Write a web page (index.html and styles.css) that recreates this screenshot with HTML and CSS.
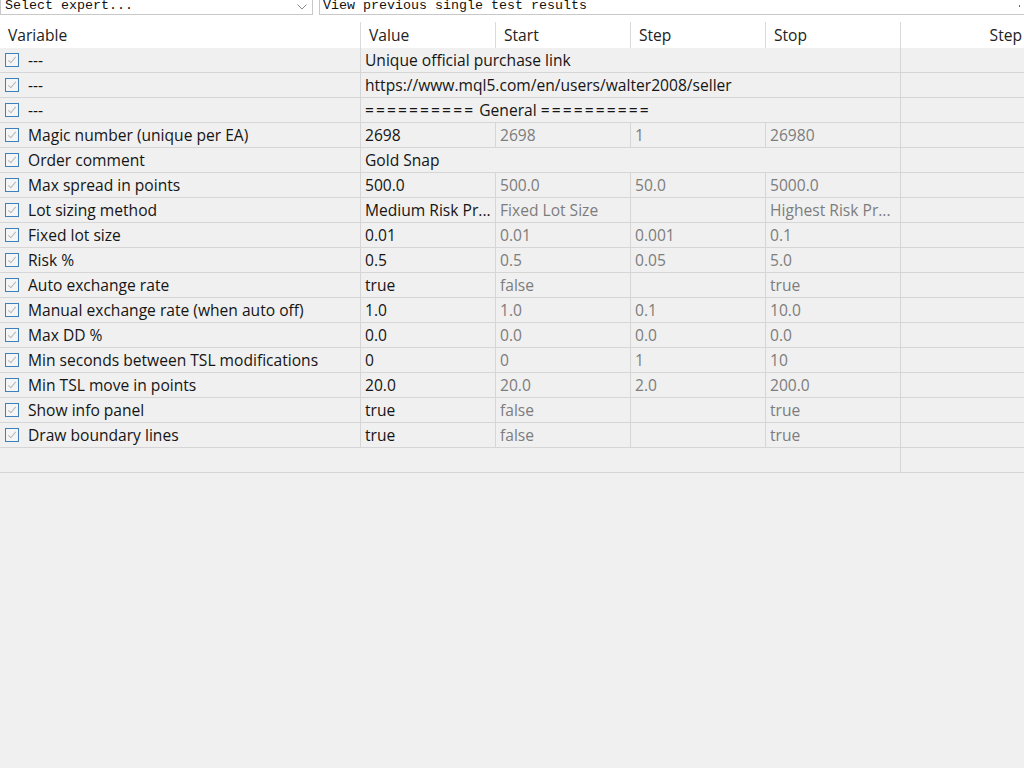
FILE: index.html
```html
<!DOCTYPE html>
<html>
<head>
<meta charset="utf-8">
<link rel="stylesheet" href="styles.css">
</head>
<body>
<div class="toolbar">
  <div class="combo expert"><span>Select expert...</span>
    <svg class="chev" width="10" height="6" viewBox="0 0 10 6"><path d="M0.5 0.5 L5 5 L9.5 0.5" fill="none" stroke="#8a8a8a" stroke-width="1"/></svg>
  </div>
  <div class="combo results"><span>View previous single test results</span><i class="tick"></i></div>
</div>
<div class="table">
  <div class="row head">
    <div class="c">Variable</div><div class="c">Value</div><div class="c">Start</div><div class="c">Step</div><div class="c">Stop</div><div class="c right">Step</div>
  </div>
  <div class="row"><div class="c var"><i class="cb"></i>---</div><div class="c span">Unique official purchase link</div><div class="c"></div></div>
  <div class="row"><div class="c var"><i class="cb"></i>---</div><div class="c span">https://www.mql5.com/en/users/walter2008/seller</div><div class="c"></div></div>
  <div class="row"><div class="c var"><i class="cb"></i>---</div><div class="c span"><span class="eq">==========</span> General <span class="eq">==========</span></div><div class="c"></div></div>
  <div class="row"><div class="c var"><i class="cb"></i>Magic number (unique per EA)</div><div class="c">2698</div><div class="c g">2698</div><div class="c g">1</div><div class="c g">26980</div><div class="c"></div></div>
  <div class="row"><div class="c var"><i class="cb"></i>Order comment</div><div class="c span">Gold Snap</div><div class="c"></div></div>
  <div class="row"><div class="c var"><i class="cb"></i>Max spread in points</div><div class="c">500.0</div><div class="c g">500.0</div><div class="c g">50.0</div><div class="c g">5000.0</div><div class="c"></div></div>
  <div class="row"><div class="c var"><i class="cb"></i>Lot sizing method</div><div class="c">Medium Risk Pr...</div><div class="c g">Fixed Lot Size</div><div class="c g"></div><div class="c g">Highest Risk Pr...</div><div class="c"></div></div>
  <div class="row"><div class="c var"><i class="cb"></i>Fixed lot size</div><div class="c">0.01</div><div class="c g">0.01</div><div class="c g">0.001</div><div class="c g">0.1</div><div class="c"></div></div>
  <div class="row"><div class="c var"><i class="cb"></i>Risk %</div><div class="c">0.5</div><div class="c g">0.5</div><div class="c g">0.05</div><div class="c g">5.0</div><div class="c"></div></div>
  <div class="row"><div class="c var"><i class="cb"></i>Auto exchange rate</div><div class="c">true</div><div class="c g">false</div><div class="c g"></div><div class="c g">true</div><div class="c"></div></div>
  <div class="row"><div class="c var"><i class="cb"></i>Manual exchange rate (when auto off)</div><div class="c">1.0</div><div class="c g">1.0</div><div class="c g">0.1</div><div class="c g">10.0</div><div class="c"></div></div>
  <div class="row"><div class="c var"><i class="cb"></i>Max DD %</div><div class="c">0.0</div><div class="c g">0.0</div><div class="c g">0.0</div><div class="c g">0.0</div><div class="c"></div></div>
  <div class="row"><div class="c var"><i class="cb"></i>Min seconds between TSL modifications</div><div class="c">0</div><div class="c g">0</div><div class="c g">1</div><div class="c g">10</div><div class="c"></div></div>
  <div class="row"><div class="c var"><i class="cb"></i>Min TSL move in points</div><div class="c">20.0</div><div class="c g">20.0</div><div class="c g">2.0</div><div class="c g">200.0</div><div class="c"></div></div>
  <div class="row"><div class="c var"><i class="cb"></i>Show info panel</div><div class="c">true</div><div class="c g">false</div><div class="c g"></div><div class="c g">true</div><div class="c"></div></div>
  <div class="row"><div class="c var"><i class="cb"></i>Draw boundary lines</div><div class="c">true</div><div class="c g">false</div><div class="c g"></div><div class="c g">true</div><div class="c"></div></div>
  <div class="row empty"><div class="c wide"></div><div class="c"></div></div>
</div>
</body>
</html>
```
FILE: styles.css
```css
html, body { margin: 0; padding: 0; }
body {
  width: 1024px; height: 768px; overflow: hidden;
  background: #f0f0f0;
  font-family: "Open Sans", "Noto Sans", sans-serif;
  font-size: 15.6px; color: #151515;
}
.toolbar {
  background: #fff; height: 22px; display: flex; gap: 6px;
  align-items: flex-start;
}
.combo {
  position: relative;
  height: 19px; margin-top: -4px;
  border: 1px solid #c8c8c8; background: #fff; box-sizing: border-box;
  font-family: "Liberation Mono", monospace; font-size: 13.33px; line-height: 17px;
  color: #111; padding-left: 4px; white-space: nowrap;
}
.expert { width: 313px; }
.results { flex: 1; padding-left: 3px; margin-right: -4px; }
.chev { position: absolute; right: 5px; top: 7px; }
.tick { position: absolute; right: 7px; top: 8px; width: 1px; height: 2px; background: #666; }
.table { width: 1024px; }
.row {
  display: grid; grid-template-columns: 360px 135px 135px 135px 135px 1fr;
  height: 25px; border-bottom: 1px solid #d6d6d6; box-sizing: border-box;
}
.row.head { background: #fff; border-bottom: none; height: 26px; }
.head .c { padding-left: 8px; line-height: 26px; color: #222; }
.head .c + .c { border-left: 1px solid #dadada; }
.head .c.right { text-align: right; padding-right: 2px; }
.c { box-sizing: border-box; line-height: 24px; white-space: nowrap; overflow: hidden; padding-left: 4px; }
.row:not(.head) .c + .c { border-left: 1px solid #d6d6d6; }
.var { display: flex; align-items: center; padding-left: 5px; }
.span { grid-column: span 4; }
.wide { grid-column: span 5; }
.g { color: #7d7d7d; }
.eq { letter-spacing: 2.1px; }
.cb {
  width: 14px; height: 14px; box-sizing: border-box; margin-right: 9px;
  border: 1px solid #3f7fba; background: #f5f5f5; flex: none; position: relative;
}
.cb::after {
  content: ""; position: absolute; left: 4px; top: 1px; width: 3px; height: 7px;
  border: solid #b8b8b8; border-width: 0 1.5px 1.5px 0; transform: rotate(40deg);
}
```
